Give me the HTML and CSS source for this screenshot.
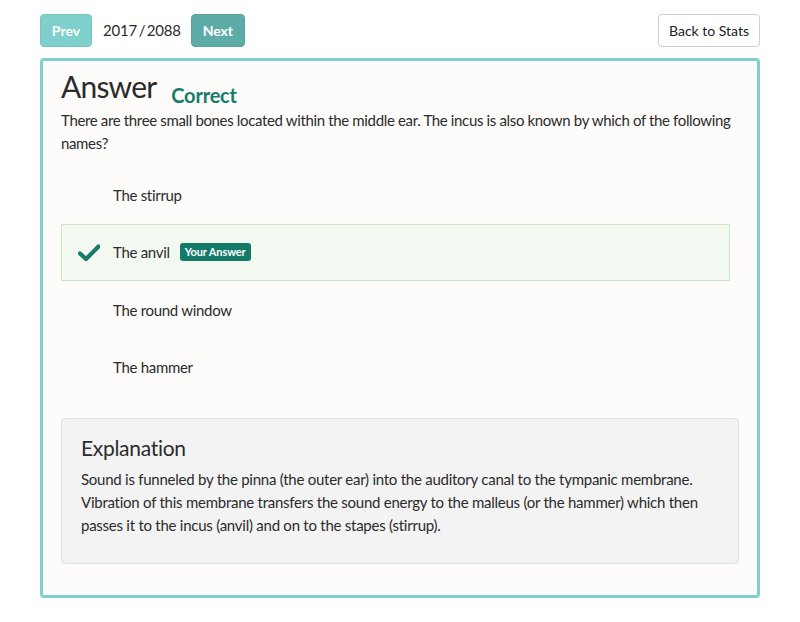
FILE: index.html
```html
<!DOCTYPE html>
<html>
<head>
<meta charset="utf-8">
<link rel="stylesheet" href="styles.css">
</head>
<body>
<div class="page">
  <div class="toolbar">
    <div class="nav">
      <button class="btn btn-prev">Prev</button>
      <span class="counter">2017 / 2088</span>
      <button class="btn btn-next">Next</button>
    </div>
    <button class="btn btn-back">Back to Stats</button>
  </div>
  <div class="card">
    <div class="heading">
      <h1 class="title">Answer</h1>
      <span class="status">Correct</span>
    </div>
    <p class="question">There are three small bones located within the middle ear. The incus is also known by which of the following names?</p>
    <ul class="options">
      <li class="option"><span class="mark"></span><span class="label">The stirrup</span></li>
      <li class="option selected">
        <span class="mark"><svg width="22" height="17" viewBox="0 0 22 17"><path d="M2 9.5 L8 15 L20.5 2.5" fill="none" stroke="#177a6b" stroke-width="4.2" stroke-linecap="round" stroke-linejoin="round"/></svg></span>
        <span class="label">The anvil</span><span class="badge">Your Answer</span>
      </li>
      <li class="option"><span class="mark"></span><span class="label">The round window</span></li>
      <li class="option"><span class="mark"></span><span class="label">The hammer</span></li>
    </ul>
    <div class="explanation">
      <h2 class="exp-title">Explanation</h2>
      <p class="exp-text">Sound is funneled by the pinna (the outer ear) into the auditory canal to the tympanic membrane. Vibration of this membrane transfers the sound energy to the malleus (or the hammer) which then passes it to the incus (anvil) and on to the stapes (stirrup).</p>
    </div>
  </div>
</div>
</body>
</html>
```
FILE: styles.css
```css
* { box-sizing: border-box; }
body {
  margin: 0;
  background: #ffffff;
  font-family: Lato, "Open Sans", sans-serif;
  color: #2b2b2b;
}
.page {
  width: 720px;
  margin: 0 0 0 40px;
  padding-top: 14px;
}
.toolbar {
  display: flex;
  justify-content: space-between;
  align-items: center;
  height: 33px;
}
.nav {
  display: flex;
  align-items: center;
}
.btn {
  font-family: Lato, sans-serif;
  height: 33px;
  border-radius: 4px;
  font-size: 14px;
  cursor: pointer;
  padding: 0;
}
.btn-prev, .btn-next {
  color: #fff;
  font-weight: 700;
  border: 1px solid transparent;
}
.btn-prev {
  width: 52px;
  background: #7fcfcd;
  border-color: #74c6c3;
}
.btn-next {
  width: 54px;
  background: #5eaca8;
  border-color: #57a4a0;
}
.counter {
  font-size: 15px;
  letter-spacing: -0.2px;
  word-spacing: -2px;
  margin: 0 10px 0 11px;
  color: #2b2b2b;
  position: relative;
  top: -1px;
}
.btn-back {
  width: 102px;
  background: #fff;
  border: 1px solid #cfcfcf;
  color: #222;
  font-size: 14px;
}
.card {
  margin-top: 11px;
  border: 3px solid #7fcfcc;
  border-radius: 4px;
  background: #fdfcfa;
  padding: 7px 18px 33px 18px;
  height: 540px;
}
.heading {
  display: flex;
  align-items: baseline;
}
.title {
  margin: 0;
  font-size: 30px;
  font-weight: 400;
  letter-spacing: -0.8px;
  line-height: 36px;
  color: #2b2b2b;
}
.status {
  margin-left: 15px;
  font-size: 20px;
  font-weight: 700;
  letter-spacing: -0.2px;
  color: #187a6b;
  position: relative;
  top: 5px;
}
.question {
  margin: 5px 0 0 0;
  font-size: 15px;
  letter-spacing: -0.35px;
  line-height: 23px;
  color: #2b2b2b;
}
.options {
  list-style: none;
  margin: 11px 9px 0 0;
  padding: 0;
}
.option {
  display: flex;
  align-items: center;
  height: 57.5px;
  border: 1px solid transparent;
  font-size: 15px;
  letter-spacing: -0.3px;
}
.option.selected {
  background: #f3f9f1;
  border-color: #c9e5c2;
}
.mark {
  width: 51px;
  padding-left: 16px;
  display: flex;
  align-items: center;
}
.label {
  color: #2b2b2b;
}
.badge {
  margin-left: 10px;
  background: #137a6a;
  color: #fff;
  font-size: 11px;
  font-weight: 700;
  letter-spacing: -0.1px;
  padding: 2px 5px;
  border-radius: 3px;
  line-height: 14px;
}
.explanation {
  margin-top: 22px;
  background: #f3f3f3;
  border: 1px solid #e2e2e2;
  border-radius: 4px;
  padding: 16px 19px 27px 19px;
  height: 146px;
}
.exp-title {
  margin: 0;
  font-size: 21px;
  font-weight: 400;
  letter-spacing: -0.3px;
  line-height: 26px;
  color: #2b2b2b;
}
.exp-text {
  margin: 7px 0 0 0;
  font-size: 15px;
  letter-spacing: -0.25px;
  line-height: 23px;
  color: #2b2b2b;
}
```
